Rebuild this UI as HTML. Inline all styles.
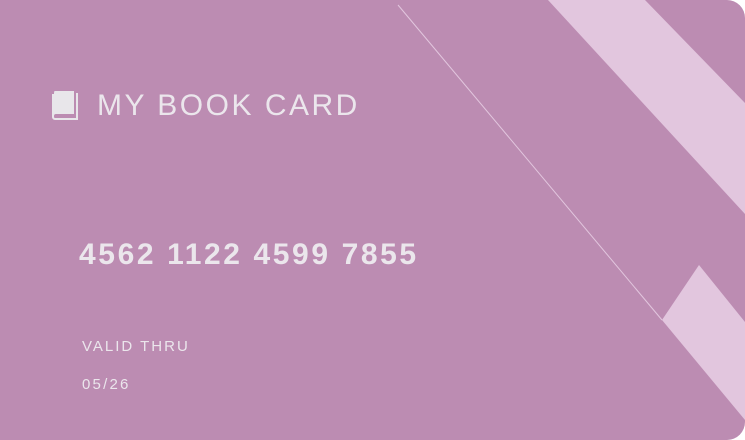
<html><head><style>
body{margin:0;width:745px;height:440px;overflow:hidden;background:#fff;font-family:"Liberation Sans",sans-serif}
.card{position:absolute;left:0;top:0;width:745px;height:440px;background:#bc8cb2;border-radius:0 18px 18px 0;overflow:hidden}
svg{position:absolute;left:0;top:0}
.t{position:absolute;color:#ebe6ec;white-space:nowrap}
</style></head><body><div class="card">
<svg width="745" height="440">
<polygon points="548,0 645,0 745,103 745,214" fill="#e2c6de"/>
<polygon points="662,320 699,265 745,322 745,420" fill="#e2c6de"/>
<line x1="398" y1="5" x2="662" y2="320" stroke="#e2c6de" stroke-width="1"/>
<path d="M54 91h20v23h-18v-21a2 2 0 0 0 0 0z" fill="#e8e6ea"/>
<path d="M54 93a2 2 0 0 1 2-2v23a2 2 0 0 0-2 2z" fill="#e8e6ea"/>
<path d="M52 94v23a3 3 0 0 0 3 3h23v-27h-2v25h-21a1 1 0 0 1-1-1v-23z" fill="#e8e6ea"/>
</svg>
<div class="t" style="left:97px;top:89px;font-size:30px;letter-spacing:2.5px">MY BOOK CARD</div>
<div class="t" style="left:79px;top:238px;font-size:30px;font-weight:bold;letter-spacing:2.6px">4562 1122 4599 7855</div>
<div class="t" style="left:82px;top:338px;font-size:15px;letter-spacing:2px">VALID THRU</div>
<div class="t" style="left:82px;top:376px;font-size:15px;letter-spacing:2.2px">05/26</div>
</div></body></html>
